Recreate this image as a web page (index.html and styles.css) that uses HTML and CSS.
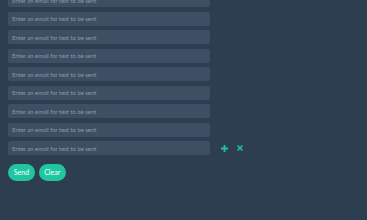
FILE: index.html
```html
<!DOCTYPE html>
<html>
<head>
<meta charset="utf-8">
<link rel="stylesheet" href="styles.css">
</head>
<body>
<div class="form">
  <div class="list">
    <div class="row"><input class="email" placeholder="Enter an email for test to be sent"></div>
    <div class="row"><input class="email" placeholder="Enter an email for test to be sent"></div>
    <div class="row"><input class="email" placeholder="Enter an email for test to be sent"></div>
    <div class="row"><input class="email" placeholder="Enter an email for test to be sent"></div>
    <div class="row"><input class="email" placeholder="Enter an email for test to be sent"></div>
    <div class="row"><input class="email" placeholder="Enter an email for test to be sent"></div>
    <div class="row"><input class="email" placeholder="Enter an email for test to be sent"></div>
    <div class="row"><input class="email" placeholder="Enter an email for test to be sent"></div>
    <div class="row">
      <input class="email" placeholder="Enter an email for test to be sent">
      <span class="actions">
        <svg class="icon" width="7" height="7" viewBox="0 0 7 7"><path d="M2.6 0h1.8v2.6H7v1.8H4.4V7H2.6V4.4H0V2.6h2.6z" fill="#1dc6a0"/></svg>
        <svg class="icon" width="6" height="6" viewBox="0 0 6 6"><path d="M1 0L3 2 5 0 6 1 4 3 6 5 5 6 3 4 1 6 0 5 2 3 0 1z" fill="#1dc6a0"/></svg>
      </span>
    </div>
  </div>
  <div class="buttons">
    <button class="btn">Send</button>
    <button class="btn">Clear</button>
  </div>
</div>
</body>
</html>
```
FILE: styles.css
```css
html, body {
  margin: 0;
  padding: 0;
  background: #2d3e50;
  height: 100%;
  overflow: hidden;
}
body {
  font-family: Lato, "Open Sans", sans-serif;
}
.form {
  padding: 0 8px;
  margin-top: -6.7px;
}
.list {
  display: flex;
  flex-direction: column;
  gap: 4.5px;
}
.row {
  display: flex;
  align-items: center;
}
.email {
  box-sizing: border-box;
  width: 202px;
  height: 14px;
  margin: 0;
  border: none;
  border-radius: 2px;
  background: #3d4f63;
  padding: 0 4px;
  font-family: Lato, "Open Sans", sans-serif;
  font-size: 5.9px;
  color: #c8d2dc;
  outline: none;
}
.email::placeholder {
  color: #8b9aaa;
}
.actions {
  display: flex;
  align-items: center;
  gap: 9px;
  margin-left: 11px;
}
.icon {
  display: block;
}
.buttons {
  display: flex;
  gap: 3.7px;
  margin-top: 8.4px;
}
.btn {
  box-sizing: border-box;
  width: 27px;
  height: 17px;
  padding: 0;
  border: none;
  border-radius: 9px;
  background: #1fc6a0;
  color: #ffffff;
  font-family: Lato, "Open Sans", sans-serif;
  font-size: 7px;
}
```
